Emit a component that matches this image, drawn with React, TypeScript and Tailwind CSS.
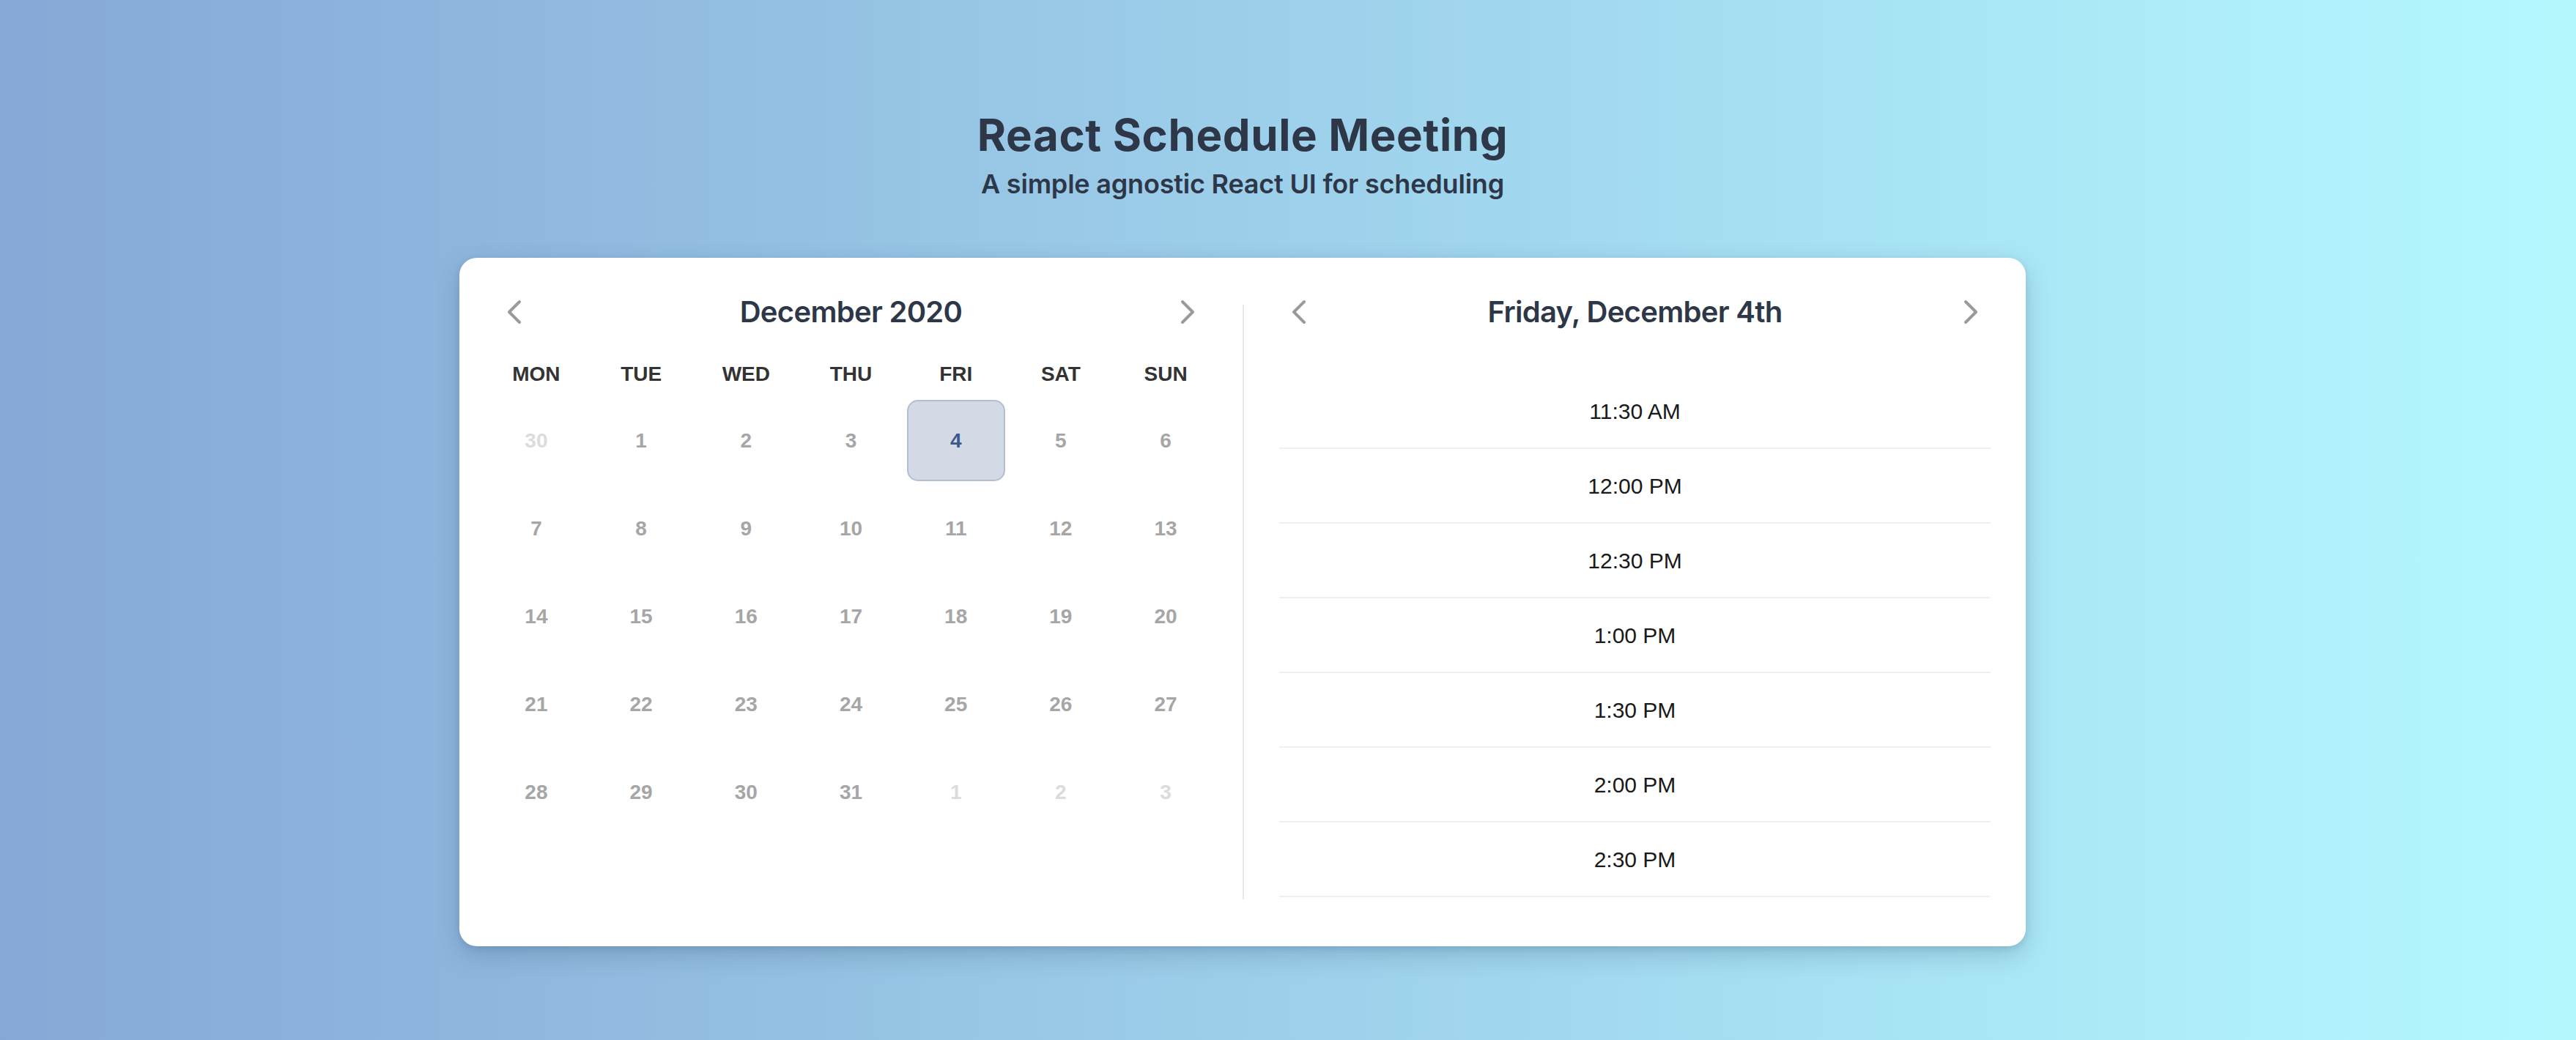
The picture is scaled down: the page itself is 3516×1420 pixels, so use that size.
import React from "react";

const heading = { fontFamily: "Inter, 'Noto Sans', sans-serif" };
const body = { fontFamily: "'Liberation Sans', Arial, sans-serif" };

function Chevron({ dir }: { dir: "left" | "right" }) {
  return (
    <button className="flex items-center justify-center w-[20px] h-[34px]">
      <svg width="20" height="34" viewBox="0 0 20 34" fill="none">
        <polyline
          points={dir === "left" ? "17,3 3,17 17,31" : "3,3 17,17 3,31"}
          stroke="#9a9a9a"
          strokeWidth="4"
          strokeLinecap="round"
          strokeLinejoin="round"
        />
      </svg>
    </button>
  );
}

const dayNames = ["MON", "TUE", "WED", "THU", "FRI", "SAT", "SUN"];

// December 2020, weeks starting Monday
const days: { d: number; inMonth: boolean }[] = [
  { d: 30, inMonth: false },
  ...Array.from({ length: 31 }, (_, i) => ({ d: i + 1, inMonth: true })),
  { d: 1, inMonth: false },
  { d: 2, inMonth: false },
  { d: 3, inMonth: false },
];

const slots = ["11:30 AM", "12:00 PM", "12:30 PM", "1:00 PM", "1:30 PM", "2:00 PM", "2:30 PM"];

export default function App() {
  return (
    <div className="min-h-screen w-full bg-linear-to-r from-[#86a8d6] to-[#b5f9ff]">
      <div className="flex flex-col items-center pr-[124px] pt-[154px]">
        {/* Title */}
        <h1 style={heading} className="text-[60px] leading-[60px] font-bold tracking-[0.6px] text-[#2d3748]">
          React Schedule Meeting
        </h1>
        <p style={heading} className="mt-[19px] text-[36px] leading-[36px] font-semibold tracking-[-0.2px] text-[#2d3748]">
          A simple agnostic React UI for scheduling
        </p>

        {/* Card */}
        <div className="mt-[83px] flex w-[2138px] h-[940px] rounded-[24px] bg-white shadow-[0_12px_34px_rgba(30,60,90,0.22),0_3px_8px_rgba(30,60,90,0.12)]">
          {/* Calendar */}
          <div className="flex w-[1069px] flex-col pt-[54px]">
            <div className="flex h-[40px] items-center justify-between px-[65px]">
              <Chevron dir="left" />
              <h2 style={heading} className="text-[40px] leading-[40px] font-semibold tracking-[-0.7px] text-[#2d3748]">
                December 2020
              </h2>
              <Chevron dir="right" />
            </div>

            <div
              style={body}
              className="mt-[51px] grid grid-cols-[repeat(7,134px)] justify-center gap-x-[9.2px] text-[28px] leading-[28px] font-bold text-[#333333]"
            >
              {dayNames.map((n) => (
                <div key={n} className="text-center">
                  {n}
                </div>
              ))}
            </div>

            <div
              style={body}
              className="mt-[21px] grid grid-cols-[repeat(7,134px)] auto-rows-[111px] justify-center gap-x-[9.2px] gap-y-[9px] text-[28px] font-bold"
            >
              {days.map((day, i) => {
                const selected = day.inMonth && day.d === 4;
                return (
                  <div
                    key={i}
                    className={
                      selected
                        ? "flex items-center justify-center rounded-[15px] border-2 border-[#b1bfd2] bg-[#d3dae5] text-[#3b5a8a]"
                        : day.inMonth
                        ? "flex items-center justify-center text-[#a6a6a6]"
                        : "flex items-center justify-center text-[#dcdcdc]"
                    }
                  >
                    {day.d}
                  </div>
                );
              })}
            </div>
          </div>

          {/* Divider */}
          <div className="my-[64px] w-[2px] bg-[#e8e8e8]" />

          {/* Time slots */}
          <div className="flex flex-1 flex-col pt-[54px]">
            <div className="flex h-[40px] items-center justify-between px-[65px]">
              <Chevron dir="left" />
              <h2 style={heading} className="text-[40px] leading-[40px] font-semibold tracking-[-0.7px] text-[#2d3748]">
                Friday, December 4th
              </h2>
              <Chevron dir="right" />
            </div>

            <ul style={body} className="mt-[65px] px-[48px]">
              {slots.map((s) => (
                <li
                  key={s}
                  className="flex h-[102px] items-center justify-center border-b-2 border-[#f0f0f0] text-[30px] text-[#1a1a1a]"
                >
                  {s}
                </li>
              ))}
            </ul>
          </div>
        </div>
      </div>
    </div>
  );
}
